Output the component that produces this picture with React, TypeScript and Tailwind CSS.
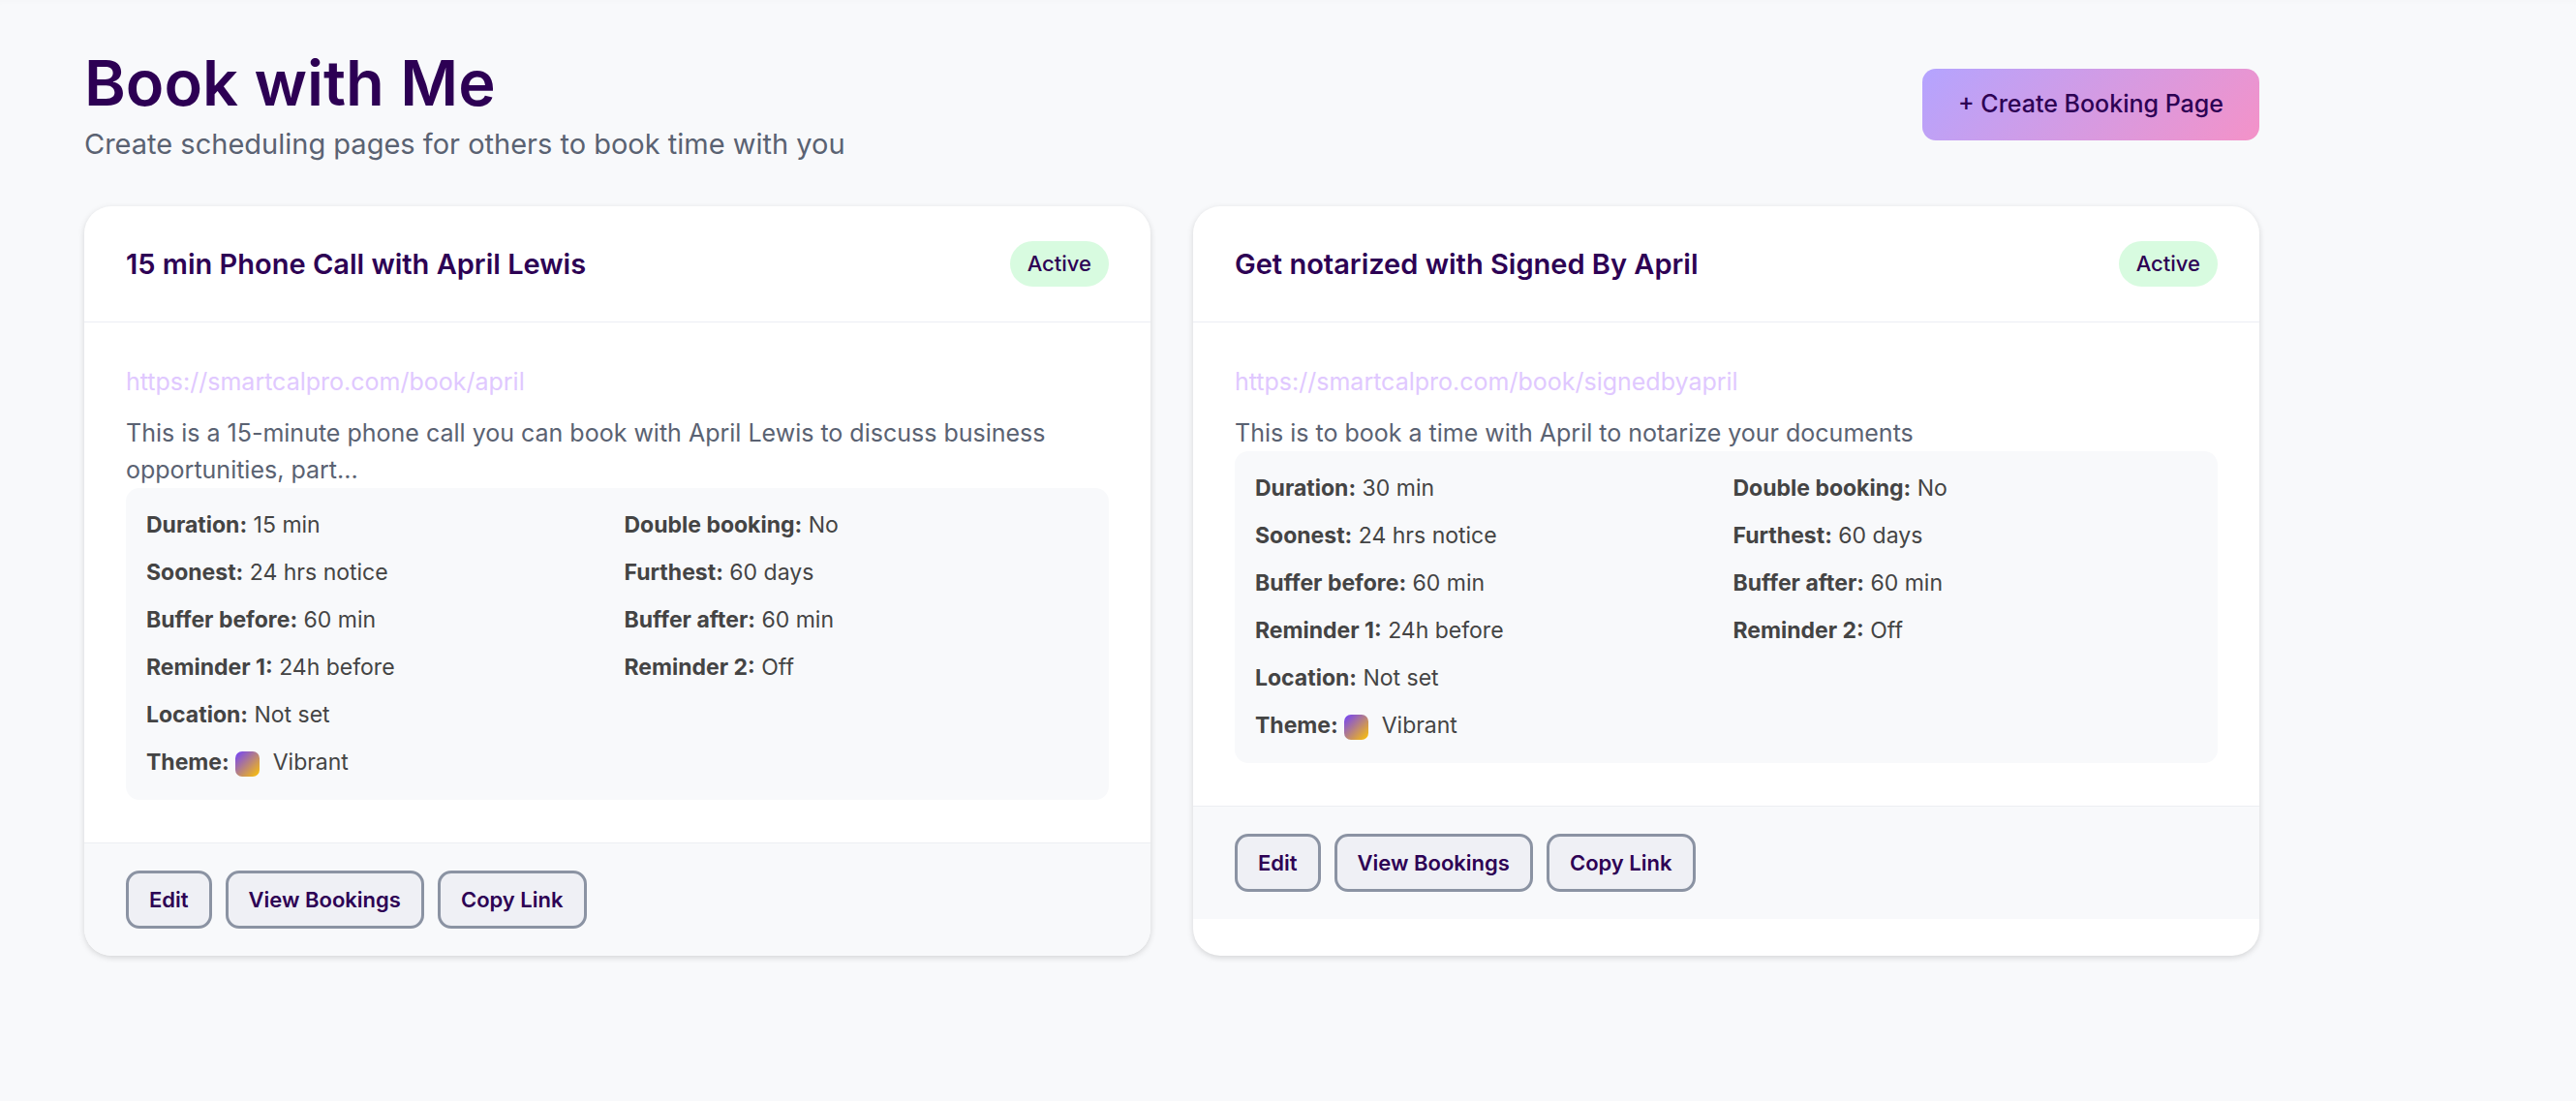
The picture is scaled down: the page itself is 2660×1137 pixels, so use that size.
type Detail = { label: string; value: string };

type BookingPage = {
  title: string;
  url: string;
  description: string;
  details: Detail[];
};

const pages: BookingPage[] = [
  {
    title: '15 min Phone Call with April Lewis',
    url: 'https://smartcalpro.com/book/april',
    description:
      'This is a 15-minute phone call you can book with April Lewis to discuss business opportunities, part...',
    details: [
      { label: 'Duration', value: '15 min' },
      { label: 'Double booking', value: 'No' },
      { label: 'Soonest', value: '24 hrs notice' },
      { label: 'Furthest', value: '60 days' },
      { label: 'Buffer before', value: '60 min' },
      { label: 'Buffer after', value: '60 min' },
      { label: 'Reminder 1', value: '24h before' },
      { label: 'Reminder 2', value: 'Off' },
    ],
  },
  {
    title: 'Get notarized with Signed By April',
    url: 'https://smartcalpro.com/book/signedbyapril',
    description: 'This is to book a time with April to notarize your documents',
    details: [
      { label: 'Duration', value: '30 min' },
      { label: 'Double booking', value: 'No' },
      { label: 'Soonest', value: '24 hrs notice' },
      { label: 'Furthest', value: '60 days' },
      { label: 'Buffer before', value: '60 min' },
      { label: 'Buffer after', value: '60 min' },
      { label: 'Reminder 1', value: '24h before' },
      { label: 'Reminder 2', value: 'Off' },
    ],
  },
];

const actions = ['Edit', 'View Bookings', 'Copy Link'];

function BookingCard({ page }: { page: BookingPage }) {
  return (
    <article className="bg-white rounded-[28px] overflow-hidden shadow-[0_2px_6px_rgba(0,0,0,0.15)]">
      <div className="flex items-center justify-between px-[43px] py-9 border-b border-[#eceef4]">
        <h2 className="text-[29px] leading-[42px] font-semibold text-[#2d0054]">{page.title}</h2>
        <span className="bg-[#d8fbe0] text-[#2d0054] text-[22px] leading-[35px] font-medium rounded-full px-[18px] py-[6px]">
          Active
        </span>
      </div>

      <div className="px-[43px] py-11">
        <a href={page.url} className="block w-fit mb-[17px] text-[25px] leading-[34px] text-[#e0c8ff]">
          {page.url}
        </a>
        <p className="text-[25px] leading-[38px] text-[#5a6272]">{page.description}</p>
        <div className="grid grid-cols-2 gap-[14px] px-[21px] py-[21px] bg-[#f8f9fb] rounded-[14px] text-[23px] leading-[35px] text-[#444444]">
          {page.details.map(d => (
            <div key={d.label}>
              <strong className="font-bold">{d.label}:</strong> {d.value}
            </div>
          ))}
          <div className="col-span-2">
            <strong className="font-bold">Location:</strong> Not set
          </div>
          <div className="col-span-2 h-[35px]">
            <strong className="font-bold">Theme:</strong>{' '}
            <span className="inline-block align-middle w-[25px] h-[26px] mr-[7px] rounded-[7px] bg-[linear-gradient(135deg,#7040ff,#ffc400)]" />{' '}
            Vibrant
          </div>
        </div>
      </div>

      <div className="flex gap-[14px] px-[43px] py-7 bg-[#f8f9fb] border-t border-[#eceef2]">
        {actions.map(a => (
          <button
            key={a}
            type="button"
            className="h-[60px] px-[21px] border-3 border-[#8b93a3] rounded-[14px] bg-[#eff0f5] text-[22px] font-semibold text-[#2d0054]"
          >
            {a}
          </button>
        ))}
      </div>
    </article>
  );
}

export default function App() {
  return (
    <div className="min-h-screen bg-[#f8f9fb] shadow-[inset_0_6px_6px_-4px_rgba(0,0,0,0.015)] font-['Inter',sans-serif]">
      <main className="w-full max-w-[2420px] px-[87px] pt-[45px] pb-12">
        <header className="flex items-center justify-between mb-[42px]">
          <div>
            <h1 className="text-[65px] leading-[82px] font-semibold text-[#2d0054]">Book with Me</h1>
            <p className="text-[29px] leading-[44px] text-[#5a6272]">
              Create scheduling pages for others to book time with you
            </p>
          </div>
          <button
            type="button"
            className="h-[74px] px-[37px] rounded-[14px] bg-[linear-gradient(135deg,#b4a4ff,#f492c8)] text-[25px] font-medium text-[#2d0054]"
          >
            + Create Booking Page
          </button>
        </header>

        <div className="grid grid-cols-2 gap-11">
          {pages.map(p => (
            <BookingCard key={p.url} page={p} />
          ))}
        </div>
      </main>
    </div>
  );
}
